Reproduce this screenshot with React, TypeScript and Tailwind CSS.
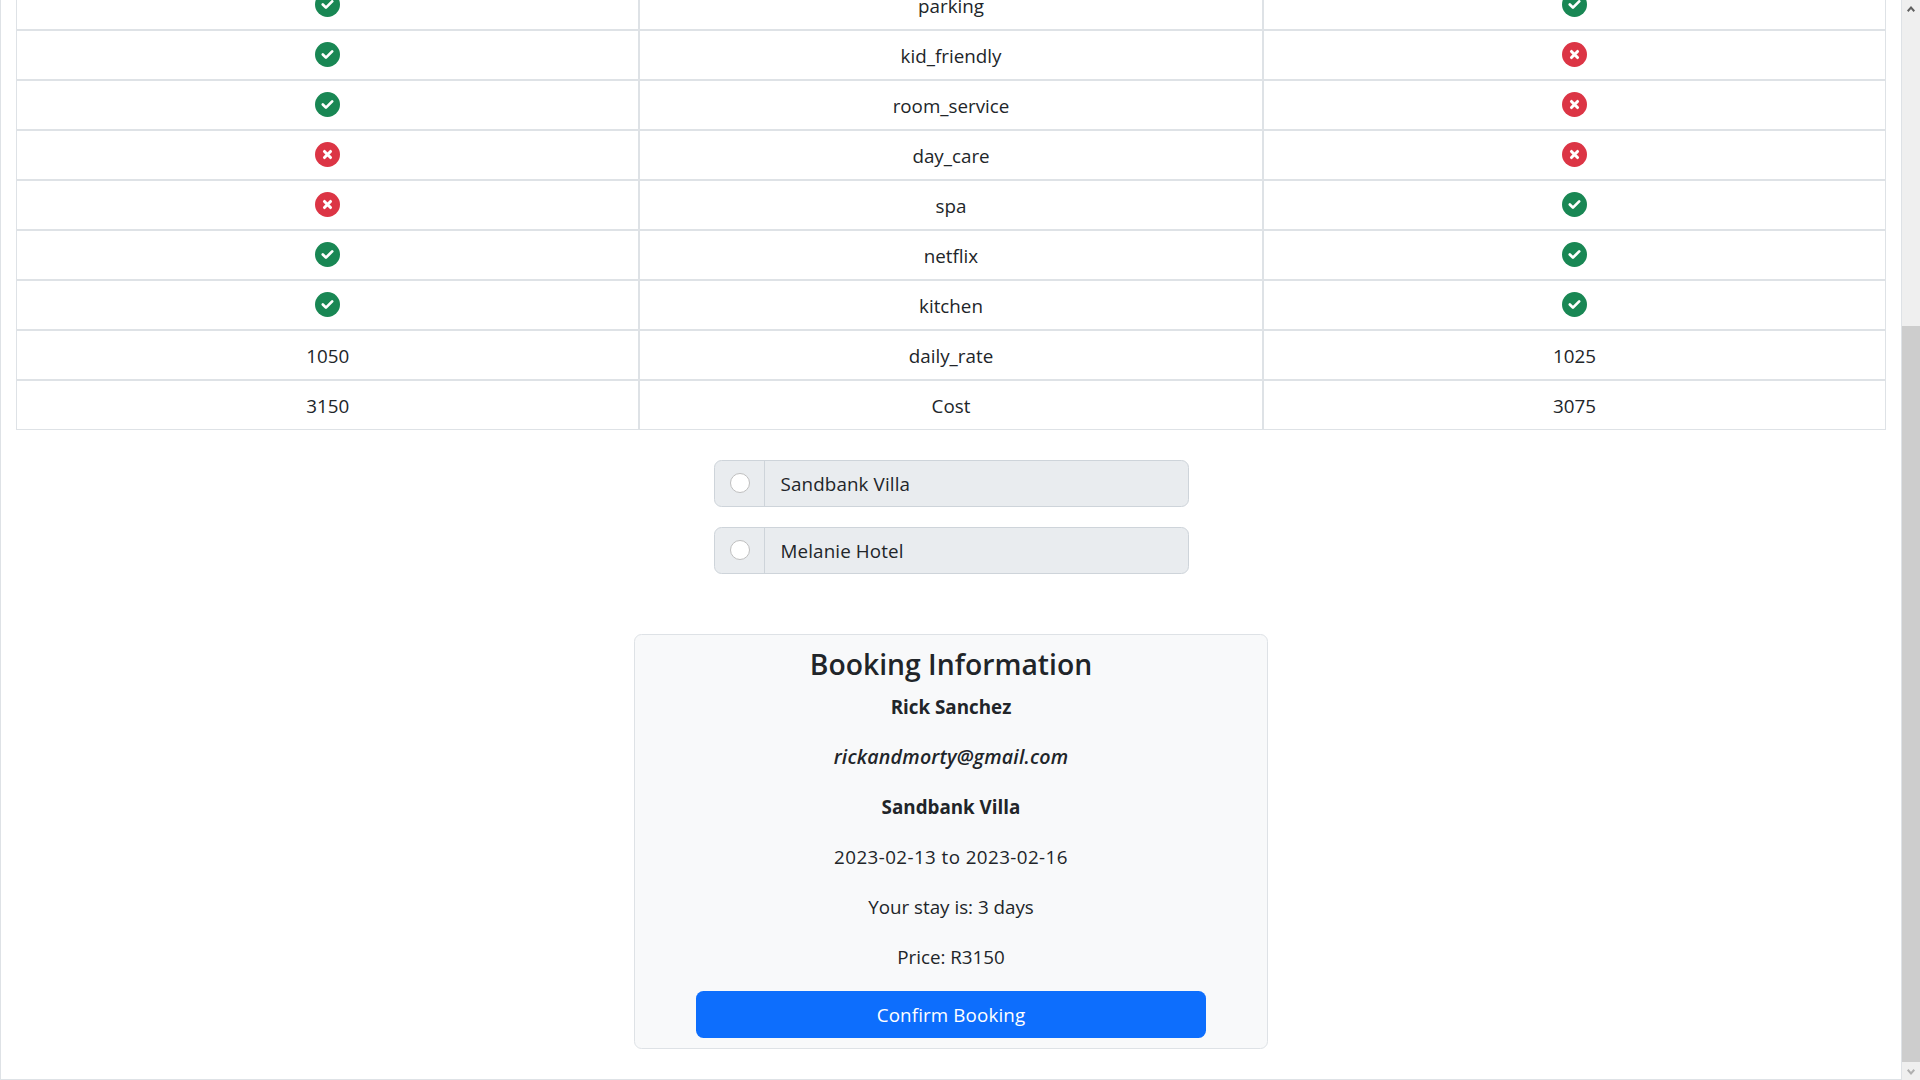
type Cell = boolean | number;

const rows: { left: Cell; label: string; right: Cell }[] = [
  { left: true, label: "parking", right: true },
  { left: true, label: "kid_friendly", right: false },
  { left: true, label: "room_service", right: false },
  { left: false, label: "day_care", right: false },
  { left: false, label: "spa", right: true },
  { left: true, label: "netflix", right: true },
  { left: true, label: "kitchen", right: true },
  { left: 1050, label: "daily_rate", right: 1025 },
  { left: 3150, label: "Cost", right: 3075 },
];

function CheckBadge() {
  return (
    <svg viewBox="0 0 512 512" className="size-[25px]">
      <circle cx="256" cy="256" r="256" fill="#198754" />
      <path d="M160 256L224 320L352 192" fill="none" stroke="#fff" strokeWidth="56" strokeLinecap="round" strokeLinejoin="round" />
    </svg>
  );
}

function CrossBadge() {
  return (
    <svg viewBox="0 0 512 512" className="size-[25px]">
      <circle cx="256" cy="256" r="256" fill="#dc3545" />
      <path d="M194 194L318 318M318 194L194 318" fill="none" stroke="#fff" strokeWidth="62" strokeLinecap="round" />
    </svg>
  );
}

function Value({ value }: { value: Cell }) {
  if (typeof value === "number") {
    return <div className="flex justify-center pt-[10px]">{value}</div>;
  }
  return <div className="flex justify-center pt-[11px]">{value ? <CheckBadge /> : <CrossBadge />}</div>;
}

function HotelOption({ name }: { name: string }) {
  return (
    <label className="flex h-[47px] w-[475px] overflow-hidden rounded-[7.5px] border border-[#ced4da] bg-[#e9ecef]">
      <span className="w-[50px] border-r border-[#ced4da] pt-[12px] pl-[15px]">
        <input
          type="radio"
          name="hotel"
          className="block size-5 appearance-none rounded-full border border-[#bfbfbf] bg-white"
        />
      </span>
      <span className="pt-2 pl-4 tracking-[0.13px]">{name}</span>
    </label>
  );
}

function Scrollbar() {
  return (
    <div className="flex w-[18px] flex-col bg-[#efefef]">
      <div className="flex h-[18px] justify-center pt-[5px]">
        <svg width="8" height="8" viewBox="0 0 8 8" fill="none" stroke="#606060" strokeWidth="2">
          <path d="M0.7 6.2L4 2.6L7.3 6.2" />
        </svg>
      </div>
      <div className="h-[308px]" />
      <div className="h-[736px] bg-[#cdcdcd]" />
      <div className="flex h-[18px] justify-center pt-[6px]">
        <svg width="8" height="8" viewBox="0 0 8 8" fill="none" stroke="#b0b0b0" strokeWidth="2">
          <path d="M0.7 1.8L4 5.4L7.3 1.8" />
        </svg>
      </div>
    </div>
  );
}

export default function App() {
  return (
    <div className="flex h-[1080px] w-[1920px] overflow-hidden bg-white font-['Open_Sans',sans-serif] text-[18.8px] leading-[30px] text-[#212529]">
      <main className="flex w-[1902px] flex-col items-center border-x border-b border-[#dee2e6]">
        <section className="-mt-5 w-[1870px] shrink-0">
          {rows.map((row) => (
            <div key={row.label} className="grid h-[50px] grid-cols-[623px_624px_623px]">
              <div className="border border-[#dee2e6] pl-[0.5px]">
                <Value value={row.left} />
              </div>
              <div className="border border-[#dee2e6] pt-[10px] text-center">{row.label}</div>
              <div className="border border-[#dee2e6]">
                <Value value={row.right} />
              </div>
            </div>
          ))}
        </section>

        <section className="mt-[30px] flex flex-col gap-5">
          <HotelOption name="Sandbank Villa" />
          <HotelOption name="Melanie Hotel" />
        </section>

        <section className="mt-[60px] flex h-[415px] w-[634px] flex-col items-center rounded-[7.5px] border border-[#dee2e6] bg-[#f8f9fa] pt-[9px]">
          <h3 className="mb-2 text-[28.3px] leading-[40px] font-semibold">Booking Information</h3>
          <p className="mb-5 font-bold">Rick Sanchez</p>
          <p className="mb-5 text-[19.6px] font-semibold tracking-[0.19px] italic">rickandmorty@gmail.com</p>
          <p className="mb-5 font-bold">Sandbank Villa</p>
          <p className="mb-5 tracking-[0.42px]">2023-02-13 to 2023-02-16</p>
          <p className="mb-5">Your stay is: 3 days</p>
          <p className="mb-[19px]">Price: R3150</p>
          <button className="h-[47px] w-[510px] rounded-[7.5px] bg-[#0d6efd] tracking-[0.13px] text-white">Confirm Booking</button>
        </section>
      </main>
      <Scrollbar />
    </div>
  );
}
